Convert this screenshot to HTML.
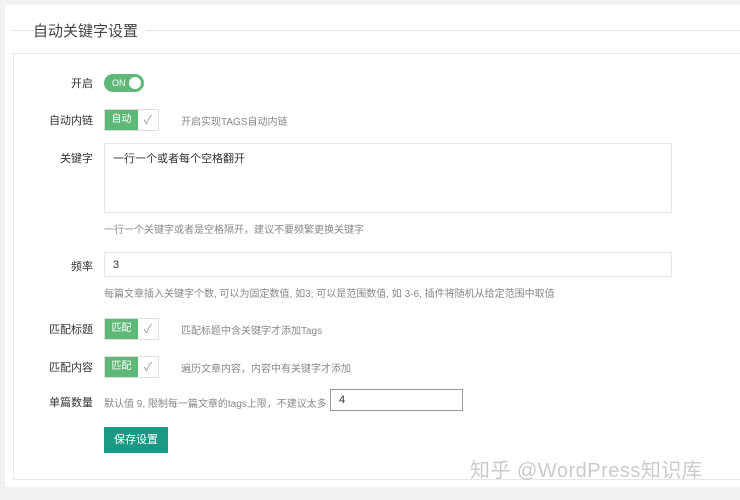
<!DOCTYPE html>
<html><head><meta charset="utf-8"><style>
body{margin:0;width:740px;height:500px;background:#f1f1f1;font-family:"Liberation Sans","Noto Sans CJK SC",sans-serif;position:relative;overflow:hidden}
.card{position:absolute;left:5px;top:5px;width:740px;height:482px;background:#fff}
.box{position:absolute;left:13px;top:53px;width:740px;height:425px;border:1px solid #e6e6e6;border-right:none}
.a{position:absolute}
.title{left:33px;top:20px;font-size:15px;color:#444;background:#fff;padding-right:8px}
.line{left:12px;top:30px;width:730px;height:1px;background:#e3e3e3}
.lbl{font-size:11px;color:#333;text-align:right;width:90px;left:3px}
.help{font-size:10px;color:#888}
.sw{display:flex;height:20px;border:1px solid #ddd}
.sw b{background:#5fb878;color:#fff;font-weight:normal;font-size:10px;width:33px;line-height:19px;text-align:center}
.sw i{width:20px;color:#999;font-style:normal;text-align:center;line-height:20px;font-size:12px}
.inp{border:1px solid #e6e6e6;background:#fff;font-size:11px;color:#333;box-sizing:border-box;padding:6px 8px}
</style></head><body>
<div class="card"></div>
<div class="a line"></div>
<div class="a title">自动关键字设置</div>
<div class="box"></div>
<div class="a lbl" style="top:75px">开启</div>
<div class="a" style="left:104px;top:74px;width:40px;height:18px;border-radius:9px;background:#5fb878"><span style="position:absolute;left:8px;top:4px;font-size:9px;color:#fff">ON</span><span style="position:absolute;right:3px;top:3px;width:12px;height:12px;border-radius:6px;background:#fff"></span></div>
<div class="a lbl" style="top:112px">自动内链</div>
<div class="a sw" style="left:104px;top:109px"><b>自动</b><i>✓</i></div>
<div class="a help" style="left:181px;top:113px">开启实现TAGS自动内链</div>
<div class="a lbl" style="top:150px">关键字</div>
<div class="a inp" style="left:104px;top:143px;width:568px;height:70px">一行一个或者每个空格翻开</div>
<div class="a help" style="left:104px;top:221px">一行一个关键字或者是空格隔开，建议不要频繁更换关键字</div>
<div class="a lbl" style="top:258px">频率</div>
<div class="a inp" style="left:104px;top:252px;width:568px;height:25px">3</div>
<div class="a help" style="left:104px;top:285px">每篇文章插入关键字个数, 可以为固定数值, 如3; 可以是范围数值, 如 3-6, 插件将随机从给定范围中取值</div>
<div class="a lbl" style="top:321px">匹配标题</div>
<div class="a sw" style="left:104px;top:318px"><b>匹配</b><i>✓</i></div>
<div class="a help" style="left:181px;top:322px">匹配标题中含关键字才添加Tags</div>
<div class="a lbl" style="top:359px">匹配内容</div>
<div class="a sw" style="left:104px;top:356px"><b>匹配</b><i>✓</i></div>
<div class="a help" style="left:181px;top:360px">遍历文章内容，内容中有关键字才添加</div>
<div class="a lbl" style="top:394px">单篇数量</div>
<div class="a help" style="left:104px;top:395px">默认值 9, 限制每一篇文章的tags上限，不建议太多</div>
<div class="a inp" style="left:330px;top:389px;width:133px;height:22px;border-color:#999;padding:4px 8px">4</div>
<div class="a" style="left:104px;top:427px;width:64px;height:26px;background:#1a9a85;color:#fff;font-size:11px;text-align:center;line-height:26px">保存设置</div>
<div class="a" style="left:470px;top:454px;font-size:20px;color:#cacaca;letter-spacing:0.5px">知乎 @WordPress知识库</div>
</body></html>
